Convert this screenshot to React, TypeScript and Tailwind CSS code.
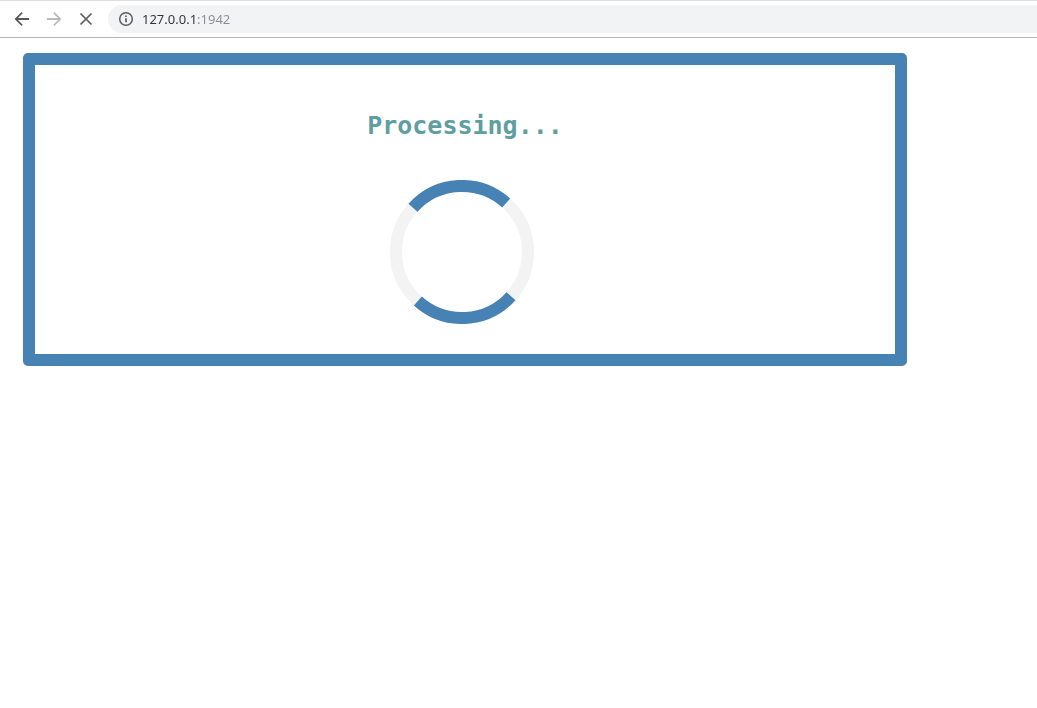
import React from "react";

function BackIcon() {
  return (
    <svg viewBox="0 0 24 24" className="size-5" fill="currentColor" aria-hidden="true">
      <path d="M20.5 10.8H7.2l5.7-5.7L11.5 3.6 3.1 12l8.4 8.4 1.4-1.5-5.7-5.7h13.3z" />
    </svg>
  );
}

function ForwardIcon() {
  return (
    <svg viewBox="0 0 24 24" className="size-5" fill="currentColor" aria-hidden="true">
      <path d="M3.5 10.8h13.3l-5.7-5.7 1.4-1.5 8.4 8.4-8.4 8.4-1.4-1.5 5.7-5.7H3.5z" />
    </svg>
  );
}

function StopIcon() {
  return (
    <svg viewBox="0 0 20 20" className="size-5" fill="none" stroke="currentColor" strokeWidth="1.7" aria-hidden="true">
      <path d="M4.5 4.5l11 11M15.5 4.5l-11 11" />
    </svg>
  );
}

function InfoIcon() {
  return (
    <svg viewBox="0 0 16 16" className="size-4 shrink-0" fill="none" stroke="currentColor" aria-hidden="true">
      <circle cx="8" cy="8" r="6.3" strokeWidth="1.5" />
      <path d="M8 7.2v4.1M8 4.5v1.5" strokeWidth="1.7" />
    </svg>
  );
}

function Toolbar() {
  return (
    <header className="flex h-[38px] items-center border-t border-b border-t-[#dedede] border-b-[#b4b4b4] bg-white pl-3 text-[#5a5c60]">
      <nav className="flex gap-3" aria-label="Browser navigation">
        <button type="button" aria-label="Back" className="text-[#55565a]">
          <BackIcon />
        </button>
        <button type="button" aria-label="Forward" className="text-[#b9babc]">
          <ForwardIcon />
        </button>
        <button type="button" aria-label="Stop">
          <StopIcon />
        </button>
      </nav>
      <div className="ml-3 flex h-7 flex-1 items-center gap-2 rounded-l-full bg-[#f1f3f4] pl-[10px]">
        <InfoIcon />
        <input
          type="text"
          aria-label="Address"
          defaultValue="127.0.0.1:1942"
          className="min-w-0 flex-1 bg-[linear-gradient(to_right,#303136_55px,#8a8d91_55px)] bg-clip-text font-['Noto_Sans',sans-serif] text-[13px] leading-5 text-transparent outline-none"
        />
      </div>
    </header>
  );
}

function Spinner() {
  return (
    <svg viewBox="0 0 144 144" className="mr-[6px] size-36" fill="none" strokeWidth="12" role="img" aria-label="Loading">
      <circle cx="72" cy="72" r="66" stroke="#f3f3f3" />
      <circle
        cx="72"
        cy="72"
        r="66"
        stroke="#4682b4"
        pathLength="360"
        strokeDasharray="90 90"
        transform="rotate(42 72 72)"
      />
    </svg>
  );
}

export default function App() {
  return (
    <div className="min-h-screen bg-white">
      <Toolbar />
      <main className="pt-[15px] pr-[130px] pl-[23px]">
        <section className="flex flex-col items-center rounded-[5px] border-12 border-[#4682b4] pt-[46px] pb-[30px]">
          <h1 className="mb-[39px] font-['DejaVu_Sans_Mono',monospace] text-[25px] leading-[30px] font-bold text-[#5f9ea0]">
            Processing...
          </h1>
          <Spinner />
        </section>
      </main>
    </div>
  );
}
